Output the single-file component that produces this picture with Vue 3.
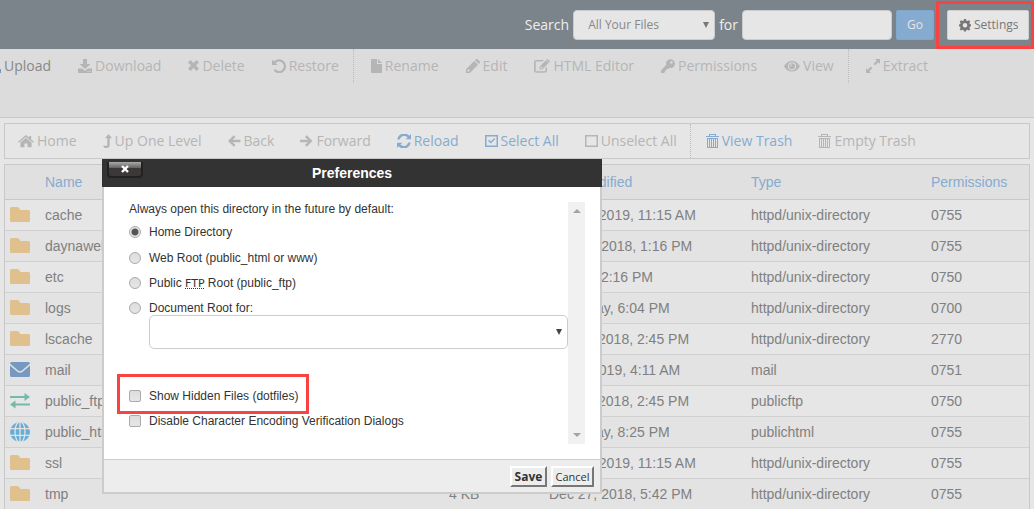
<script setup>
import { ref } from 'vue'

const scope = ref('all')
const query = ref('')
const openDir = ref('home')
const docRoot = ref('')
const showHidden = ref(false)
const noEncoding = ref(false)

const icons = {
  upload: { w: 14, d: 'M7 1l5 5H9v4H5V6H2zM0 10h4v1h6v-1h4v4H0z' },
  download: { w: 14, d: 'M5 0h4v5h3.500L7 10 1.500 5H5zM0 9.500h4.200L7 12l2.800-2.500H14V14H0zM9.500 12v1h1v-1zM11.500 12v1h1v-1z' },
  times: { w: 11, d: 'M0 3.500L2.500 1 5.500 4 8.500 1 11 3.500 8 6.500 11 9.500 8.500 12 5.500 9 2.500 12 0 9.500 3 6.500z' },
  undo: { w: 14, d: 'M0 .5l2 1.900A7 7 0 1 1 1.600 11.600l1.700-1.500A4.700 4.700 0 1 0 3.700 4L5.700 6H0z' },
  file: { w: 11, d: 'M1 0h5v5h5v8.200q0 .8-.8.8H.8Q0 14 0 13.200V.8Q0 0 1 0zM7 0l4 4H7z' },
  pencil: { w: 14, d: 'M0 14v-3.800L8.200 2 12 5.800 3.800 14zM1.500 11v1.500H3l1-1L2.500 10zM9 1.200L10.200 0q.7-.4 1.400.2l2.200 2.200q.5.700 0 1.400L12.800 5z' },
  edit: { w: 16, d: 'M2.500 1H10L8.500 2.500h-6Q1.700 2.500 1.700 3.300v8q0 .9.8.9h8q.9 0 .9-.9V9.200L13 7.700v3.600q0 2.500-2.500 2.500h-8Q0 13.800 0 11.300v-8Q0 1 2.500 1zM5.500 7.800L12 1.300 14.600 4 8.200 10.500H5.500zM12.700.6q.7-.8 1.500 0l1.200 1.200q.7.700 0 1.500l-.4.400-2.700-2.700zM6.500 8.200v1.300h1.200L8.500 8.500 7.300 7.400z' },
  key: { w: 14, d: 'M14 4.500A4.500 4.500 0 0 1 8.300 8.900L7 10H5.500v1.500H4V13l-1 1H0v-2.500L5.200 6A4.500 4.500 0 1 1 14 4.500zM11.700 3.500a1.300 1.300 0 1 0-2.600 0 1.300 1.300 0 0 0 2.600 0z' },
  eye: { w: 16, d: 'M0 7.300Q3 2 8 2t8 5.300Q13 12.600 8 12.600T0 7.300zM8 3.200a4.100 4.100 0 1 0 0 8.200 4.100 4.100 0 0 0 0-8.200zM8 4.300a3 3 0 1 1 0 6 3 3 0 0 1 0-6zM8 5.200Q6 5.200 6 7.300H7Q7 6.200 8 6.200z' },
  expand: { w: 14, d: 'M9 0h5v5l-1.700-1.700-3.100 3.100L7.600 4.800l3.100-3.100zM5 14H0V9l1.700 1.700 3.100-3.100 1.600 1.600-3.100 3.100z' },
  home: { w: 16, d: 'M8 1l3.200 2.700V2h2v3.400L16 7.800l-.8 1L8 2.900.8 8.800 0 7.800zM8 4l5.600 4.600v4.600H9.500V9.500h-3v3.700H2.400V8.600z' },
  levelup: { w: 9, d: 'M5.500 0L9 4.200H6.700V11q0 3-3 3H1.500L0 11.700h3.500q.8 0 .8-.8V4.200H2z' },
  left: { w: 13, d: 'M0 7L5.800 1.200 7.500 2.900 4.600 5.800H12.500V8.200H4.600l2.900 2.900-1.700 1.700z' },
  right: { w: 13, d: 'M12.500 7L6.700 1.200 5 2.900l2.900 2.900H0V8.200h7.900L5 11.100l1.700 1.700z' },
  sync: { w: 14, d: 'M14 0v5.300H8.700l1.900-1.900A4.700 4.700 0 0 0 2.700 5.400H.3A7 7 0 0 1 12.300 1.700zM0 14V8.700h5.300l-1.900 1.900A4.700 4.700 0 0 0 11.300 8.600h2.400A7 7 0 0 1 1.700 12.300z' },
  checkbox: { w: 13, d: 'M0 1h13v12H0zM1.500 2.500v9h10v-9zM3 6.800l1-1 1.800 1.700 3.500-3.400 1 1-4.500 4.500z' },
  square: { w: 13, d: 'M0 1h13v12H0zM1.500 2.500v9h10v-9z' },
  trash: { w: 13, d: 'M3 0h7v2h3v1H0V2h3zM4 1v1h5V1zM1 4h11v10H1zM2 5v8h1V5zM4 5v8h1V5zM6 5v8h1V5zM8 5v8h1V5zM10 5v8h1V5z' },
  cog: { w: 12, d: 'M5 1h2l.4 1.700 1 .4 1.500-.9 1.400 1.400-.9 1.500.4 1L12 6.500v1.800l-1.200.4-.4 1 .9 1.500-1.400 1.400-1.500-.9-1 .4L7 13.500H5l-.4-1.400-1-.4-1.500.9L.7 11.200l.9-1.500-.4-1L0 8.300V6.500l1.200-.4.4-1L.7 3.600l1.400-1.400 1.500.9 1-.4zM6 5a2.300 2.300 0 1 0 0 4.600A2.300 2.300 0 0 0 6 5z' },
  folder: { w: 20, h: 16, d: 'M1.500 0h6q.8 0 1.300.7L10.500 3H18.500Q20 3 20 4.500v9q0 1.500-1.500 1.500h-17Q0 15 0 13.500v-12Q0 0 1.500 0z' },
  mail: { w: 20, h: 16, d: 'M1.500 0h17Q20 0 20 1.500L12 8.500q-2 1.500-4 0L0 1.500Q0 0 1.500 0zM0 3.500l7 6q3 2.400 6 0l7-6v10q0 1.500-1.500 1.500h-17Q0 15 0 13.500z' },
  swap: { w: 20, h: 16, d: 'M14.500 0L20 4l-5.500 4V5H0V3h14.500zM5.500 7.500v3H20v2H5.500v3L0 11.500z' },
}
const glyphs = {
  folder: '#e0c08c', mail: '#7799bf', swap: '#74b9a9', globe: '#67add6',
}

const fileTools = [
  [
    { label: 'Upload', icon: 'upload', on: true },
    { label: 'Download', icon: 'download' },
    { label: 'Delete', icon: 'times' },
    { label: 'Restore', icon: 'undo' },
  ],
  [
    { label: 'Rename', icon: 'file' },
    { label: 'Edit', icon: 'pencil' },
    { label: 'HTML Editor', icon: 'edit' },
    { label: 'Permissions', icon: 'key' },
    { label: 'View', icon: 'eye' },
  ],
  [{ label: 'Extract', icon: 'expand' }],
]
const navTools = [
  [
    { label: 'Home', icon: 'home' },
    { label: 'Up One Level', icon: 'levelup' },
    { label: 'Back', icon: 'left' },
    { label: 'Forward', icon: 'right' },
    { label: 'Reload', icon: 'sync', on: true },
    { label: 'Select All', icon: 'checkbox', on: true },
    { label: 'Unselect All', icon: 'square' },
  ],
  [
    { label: 'View Trash', icon: 'trash', on: true },
    { label: 'Empty Trash', icon: 'trash' },
  ],
]

const dir = 'httpd/unix-directory'
const rows = [
  { icon: 'folder', name: 'cache', date: 'Jan 15, 2019, 11:15 AM', type: dir, perm: '0755' },
  { icon: 'folder', name: 'daynaweb', date: 'Dec 27, 2018, 1:16 PM', type: dir, perm: '0755' },
  { icon: 'folder', name: 'etc', date: 'Today, 12:16 PM', type: dir, perm: '0750' },
  { icon: 'folder', name: 'logs', date: 'Yesterday, 6:04 PM', type: dir, perm: '0700' },
  { icon: 'folder', name: 'lscache', date: 'Oct 27, 2018, 2:45 PM', type: dir, perm: '2770' },
  { icon: 'mail', name: 'mail', date: 'Jan 3, 2019, 4:11 AM', type: 'mail', perm: '0751' },
  { icon: 'swap', name: 'public_ftp', date: 'Oct 27, 2018, 2:45 PM', type: 'publicftp', perm: '0750' },
  { icon: 'globe', name: 'public_html', date: 'Yesterday, 8:25 PM', type: 'publichtml', perm: '0755' },
  { icon: 'folder', name: 'ssl', date: 'Jan 15, 2019, 11:15 AM', type: dir, perm: '0755' },
  { icon: 'folder', name: 'tmp', date: 'Dec 27, 2018, 5:42 PM', type: dir, perm: '0755' },
]
</script>

<template>
  <div class="page">
    <header class="topbar">
      <label for="scope">Search</label>
      <span class="pick scope">
        <select id="scope" v-model="scope">
          <option value="all">All Your Files</option>
        </select>
      </span>
      <label for="query">for</label>
      <input id="query" v-model="query" class="query" type="text">
      <button class="go" type="button">Go</button>
      <div class="settings-wrap">
        <button class="settings" type="button">
          <svg width="12" height="14" viewBox="0 0 12 14"><path :d="icons.cog.d" fill-rule="evenodd" /></svg>
          Settings
        </button>
        <span class="mark mark-settings"></span>
      </div>
    </header>

    <nav class="toolbar">
      <div v-for="(group, g) in fileTools" :key="g" class="group">
        <button v-for="t in group" :key="t.label" type="button" class="tool" :class="{ on: t.on }">
          <svg :width="icons[t.icon].w" height="14" :viewBox="`0 0 ${icons[t.icon].w} 14`"><path :d="icons[t.icon].d" fill-rule="evenodd" /></svg>
          <span>{{ t.label }}</span>
        </button>
      </div>
    </nav>

    <nav class="navbar">
      <div v-for="(group, g) in navTools" :key="g" class="group">
        <button v-for="t in group" :key="t.label" type="button" class="tool" :class="{ link: t.on }">
          <svg :width="icons[t.icon].w" height="14" :viewBox="`0 0 ${icons[t.icon].w} 14`"><path :d="icons[t.icon].d" fill-rule="evenodd" /></svg>
          <span>{{ t.label }}</span>
        </button>
      </div>
    </nav>

    <main class="files">
      <table>
        <colgroup>
          <col class="c-icon"><col><col class="c-size"><col class="c-date"><col class="c-type"><col class="c-perm">
        </colgroup>
        <thead>
          <tr><th></th><th>Name</th><th>Size</th><th>Last Modified</th><th>Type</th><th>Permissions</th></tr>
        </thead>
        <tbody>
          <tr v-for="r in rows" :key="r.name">
            <td class="glyph">
              <svg v-if="r.icon === 'globe'" width="20" height="20" viewBox="0 0 20 20">
                <circle cx="10" cy="10" r="10" :fill="glyphs.globe" />
                <g fill="none" stroke="#e3e3e3" stroke-width="1.300">
                  <path d="M0 6.700h20M0 13.300h20M10 0v20" />
                  <ellipse cx="10" cy="10" rx="5" ry="10.500" />
                </g>
              </svg>
              <svg v-else width="20" height="16" viewBox="0 0 20 16"><path :d="icons[r.icon].d" :fill="glyphs[r.icon]" /></svg>
            </td>
            <td>{{ r.name }}</td><td>4 KB</td><td>{{ r.date }}</td><td>{{ r.type }}</td><td>{{ r.perm }}</td>
          </tr>
        </tbody>
      </table>
    </main>

    <section class="dialog" role="dialog" aria-labelledby="dlg-title">
      <div class="dlg-head">
        <button class="close" type="button" aria-label="Close">
          <svg width="8" height="8" viewBox="0 0 8 8"><path d="M1 1l6 6M7 1L1 7" stroke="#fff" stroke-width="2.400" /></svg>
        </button>
        <h2 id="dlg-title">Preferences</h2>
      </div>
      <div class="dlg-body">
        <form class="prefs" @submit.prevent>
          <p>Always open this directory in the future by default:</p>
          <div class="opt"><input id="d-home" v-model="openDir" type="radio" name="dir" value="home"><label for="d-home">Home Directory</label></div>
          <div class="opt"><input id="d-web" v-model="openDir" type="radio" name="dir" value="web"><label for="d-web">Web Root (public_html or www)</label></div>
          <div class="opt"><input id="d-ftp" v-model="openDir" type="radio" name="dir" value="ftp"><label for="d-ftp">Public <abbr>FTP</abbr> Root (public_ftp)</label></div>
          <div class="opt"><input id="d-doc" v-model="openDir" type="radio" name="dir" value="doc"><label for="d-doc">Document Root for:</label></div>
          <span class="pick docroot">
            <select v-model="docRoot" aria-label="Document root"><option value=""></option></select>
          </span>
          <div class="opt hidden-files">
            <input id="c-hidden" v-model="showHidden" type="checkbox"><label for="c-hidden">Show Hidden Files (dotfiles)</label>
            <span class="mark mark-hidden"></span>
          </div>
          <div class="opt"><input id="c-enc" v-model="noEncoding" type="checkbox"><label for="c-enc">Disable Character Encoding Verification Dialogs</label></div>
        </form>
        <div class="scroll" aria-hidden="true"><i class="up"></i><i class="down"></i></div>
      </div>
      <div class="dlg-foot">
        <button class="save" type="button">Save</button>
        <button type="button">Cancel</button>
      </div>
    </section>
  </div>
</template>

<style>
body { background: #e6e6e6; }
</style>

<style scoped>
* { box-sizing: border-box; }
.page {
  position: relative;
  height: 100vh;
  overflow: hidden;
  font: 14px/20px "Open Sans", "Noto Sans", sans-serif;
}
button, input, select { font: inherit; margin: 0; }
button { cursor: pointer; }
svg { display: block; flex: none; fill: currentColor; }

.topbar {
  display: flex;
  align-items: center;
  justify-content: flex-end;
  gap: 4px;
  height: 49px;
  padding: 0 5px 0 4px;
  background: #7c848b;
  color: #eee;
}
.pick { position: relative; display: block; }
.pick select {
  appearance: none;
  display: block;
  width: 100%;
  border: 1px solid #ccc;
  border-radius: 4px;
}
.pick::after {
  content: "";
  position: absolute;
  right: 6px;
  top: 50%;
  margin-top: -3px;
  border: 3px solid transparent;
  border-top: 6px solid #777;
  border-bottom: 0;
  pointer-events: none;
}
.scope { width: 142px; }
.scope select {
  height: 30px;
  padding: 0 14px;
  background: #e6e6e6;
  color: #888;
  font-size: 12px;
}
.query {
  width: 150px;
  height: 30px;
  padding: 0 12px;
  border: 1px solid #ccc;
  border-radius: 4px;
  background: #e6e6e6;
}
.go, .settings {
  height: 30px;
  border-radius: 2px;
  font-size: 12px;
}
.go { width: 38px; padding: 0; border: 1px solid #7fa8cd; background: #86abd0; color: #e6e6e6; }
.settings-wrap { position: relative; margin-left: 9px; }
.settings {
  display: flex;
  align-items: center;
  gap: 3px;
  width: 82px;
  padding: 0 11px;
  border: 1px solid #d0d0d0;
  background: #e6e6e6;
  color: #777;
}
.mark { position: absolute; border: 3px solid #f94343; pointer-events: none; }
.mark-settings { inset: -9px -5px -9px -11px; }

.toolbar {
  display: flex;
  height: 69px;
  margin-left: -26px;
  border-bottom: 1px solid #c8c8c8;
  background: #dcdcdc;
}
.navbar {
  display: flex;
  height: 36px;
  margin: 5px 4px;
  border: 1px solid #c8c8c8;
}
.group { display: flex; height: 34px; }
.group + .group { border-left: 1px dotted #bbb; padding-left: 4px; }
.navbar .group + .group { padding-left: 2px; }
.tool {
  display: flex;
  align-items: center;
  gap: 3px;
  padding: 0 13px;
  border: 0;
  background: none;
  color: #b5b5b5;
  white-space: nowrap;
}
.toolbar .tool { padding: 0 14px 0 13px; }
.toolbar .on { color: #888; }
.on svg { color: #7799bf; }
.navbar .link { color: #86abd0; }

.files {
  margin: 0 4px;
  border: 1px solid #c8c8c8;
  border-bottom: 0;
  font-family: "Liberation Sans", Arial, sans-serif;
}
table { width: 100%; table-layout: fixed; border-spacing: 0; }
.c-icon { width: 40px; }
.c-size { width: 100px; }
.c-date { width: 202px; }
.c-type { width: 180px; }
.c-perm { width: 98px; }
th, td { padding: 0; text-align: left; font-weight: 400; white-space: nowrap; }
th { height: 35px; border-bottom: 1px solid #c8c8c8; background: #e0e0e0; color: #86abd0; }
td { height: 31px; border-bottom: 1px solid #d0d0d0; color: #808080; }
tbody tr:nth-child(even) { background: #e3e3e3; }
.glyph { padding-left: 5px; }

.dialog {
  position: absolute;
  left: 102px;
  top: 159px;
  width: 500px;
  font: 12px/16px "Liberation Sans", Arial, sans-serif;
  color: #333;
}
.dlg-head {
  position: relative;
  height: 28px;
  background: #333;
}
h2 { margin: 0; color: #fff; font-size: 14px; line-height: 28px; text-align: center; }
.close {
  position: absolute;
  left: 5px;
  top: 3px;
  display: flex;
  justify-content: center;
  align-items: center;
  width: 36px;
  height: 16px;
  padding: 0;
  border: 2px solid #222;
  border-top: 0;
  border-radius: 0 0 4px 4px;
  background: linear-gradient(#aaa, #666 40%, #3c3838 42%, #3c3838);
}
.dlg-body {
  display: flex;
  padding: 15px 15px 15px 25px;
  border: 2px solid #ccc;
  border-width: 0 2px;
  background: #fff;
}
.prefs { flex: 1; height: 242px; }
p { margin: 0; line-height: 14px; padding-bottom: 1px; }
.opt { position: relative; display: flex; align-items: center; gap: 8px; height: 25px; padding-top: 4px; }
p + .opt { height: 26px; }
.opt input {
  appearance: none;
  width: 12px;
  height: 12px;
  border: 1px solid #aaa;
  border-radius: 2px;
  background: linear-gradient(#ddd, #e6e6e6);
}
.opt input[type="radio"] { border-radius: 50%; }
.opt input[type="radio"]:checked { background: radial-gradient(circle, #555 3px, #e6e6e6 4px); }
.opt input[type="checkbox"]:checked { background: #555; }
abbr { font: 11px "DejaVu Sans", sans-serif; text-decoration: underline dotted; }
.docroot { margin: -3px 0 0 20px; }
.docroot select { height: 34px; background: #fff; border-radius: 5px; }
.docroot::after { border-top-color: #444; }
.hidden-files { margin-top: 32px; }
.mark-hidden { inset: -7px auto -8px -12px; width: 192px; }
.scroll {
  display: flex;
  flex-direction: column;
  justify-content: space-between;
  align-items: center;
  width: 17px;
  padding: 7px 0;
  background: #f1f1f1;
}
.scroll i { border: 4px solid transparent; }
.scroll .up { border-top: 0; border-bottom-color: #a3a3a3; }
.scroll .down { border-bottom: 0; border-top-color: #a3a3a3; }
.dlg-foot {
  display: flex;
  justify-content: flex-end;
  gap: 4px;
  padding: 6px 6px 5px;
  border: 2px solid #ccc;
  border-top-width: 1px;
  background: #ededed;
}
.dlg-foot button {
  height: 21px;
  width: 43px;
  padding: 0;
  border: 2px solid;
  border-color: #fff #777 #777 #fff;
  background: #ededed;
  color: #333;
  font: 11px "Open Sans", "Noto Sans", sans-serif;
}
.dlg-foot .save { width: 37px; font-size: 12px; font-weight: 700; }
</style>
